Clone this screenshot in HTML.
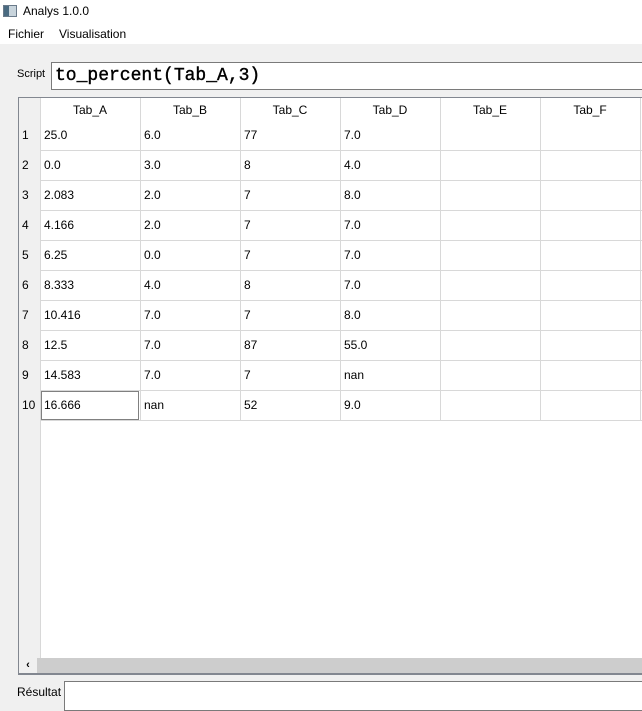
<!DOCTYPE html>
<html><head><meta charset="utf-8"><style>
*{margin:0;padding:0;box-sizing:border-box}
body{width:642px;height:705px;background:#f0f0f0;font-family:"Liberation Sans",sans-serif;font-size:12px;color:#000;position:relative;overflow:hidden}
.a{position:absolute}
</style></head><body>
<div class="a" style="left:0;top:0;width:642px;height:44px;background:#fff"></div>
<div class="a" style="left:3px;top:5px;width:14px;height:12px;border:1px solid #6a7a8a;background:linear-gradient(90deg,#4a6a80 0 40%,#c8d4dc 40%)"></div>
<div class="a" style="left:23px;top:4px;font-size:12px">Analys 1.0.0</div>
<div class="a" style="left:8px;top:27px">Fichier</div>
<div class="a" style="left:59px;top:27px">Visualisation</div>
<div class="a" style="left:17px;top:68px;font-size:11px">Script</div>
<div class="a" style="left:51px;top:62px;width:600px;height:28px;background:#fff;border:1px solid #7a7a7a;font-family:'Liberation Mono',monospace;font-size:18px;line-height:26px;padding-left:3px;-webkit-text-stroke:0.4px #000">to_percent(Tab_A,3)</div>
<div class="a" style="left:18px;top:97px;width:630px;height:578px;border:1px solid #828790;background:#fff"></div>
<div class="a" style="left:19px;top:98px;width:21px;height:560px;background:#f0f0f0"></div>
<div class="a" style="left:19px;top:658px;width:630px;height:16px;background:#cdcdcd"></div>
<div class="a" style="left:19px;top:658px;width:18px;height:16px;background:#f0f0f0;font-size:11px;line-height:15px;text-align:center;font-weight:bold">&lsaquo;</div>
<div class="a" style="left:19px;top:673px;width:630px;height:1px;background:#828790"></div>
<svg class="a" style="left:0;top:0" width="642" height="705">
<g stroke="#d8d8d8" stroke-width="1">
<line x1="140.5" y1="98" x2="140.5" y2="420"/><line x1="240.5" y1="98" x2="240.5" y2="420"/><line x1="340.5" y1="98" x2="340.5" y2="420"/><line x1="440.5" y1="98" x2="440.5" y2="420"/><line x1="540.5" y1="98" x2="540.5" y2="420"/><line x1="640.5" y1="98" x2="640.5" y2="420"/>
<line x1="40.5" y1="98" x2="40.5" y2="658"/>
<line x1="40" y1="150.5" x2="642" y2="150.5"/><line x1="40" y1="180.5" x2="642" y2="180.5"/><line x1="40" y1="210.5" x2="642" y2="210.5"/><line x1="40" y1="240.5" x2="642" y2="240.5"/><line x1="40" y1="270.5" x2="642" y2="270.5"/><line x1="40" y1="300.5" x2="642" y2="300.5"/><line x1="40" y1="330.5" x2="642" y2="330.5"/><line x1="40" y1="360.5" x2="642" y2="360.5"/><line x1="40" y1="390.5" x2="642" y2="390.5"/><line x1="40" y1="420.5" x2="642" y2="420.5"/>
</g>
<rect x="41.5" y="391.5" width="97" height="28" fill="none" stroke="#000" stroke-dasharray="1,1"/>
</svg>
<div class="a" style="top:103px;left:40px;width:600px;display:flex">
<div style="width:100px;text-align:center">Tab_A</div><div style="width:100px;text-align:center">Tab_B</div><div style="width:100px;text-align:center">Tab_C</div><div style="width:100px;text-align:center">Tab_D</div><div style="width:100px;text-align:center">Tab_E</div><div style="width:100px;text-align:center">Tab_F</div></div>
<div class="a" style="left:19px;top:120px;width:21px;line-height:30px;padding-left:3px">1<br>2<br>3<br>4<br>5<br>6<br>7<br>8<br>9<br>10</div>
<div class="a" style="left:40px;top:120px;line-height:30px;padding-left:4px">25.0<br>0.0<br>2.083<br>4.166<br>6.25<br>8.333<br>10.416<br>12.5<br>14.583<br>16.666</div>
<div class="a" style="left:140px;top:120px;line-height:30px;padding-left:4px">6.0<br>3.0<br>2.0<br>2.0<br>0.0<br>4.0<br>7.0<br>7.0<br>7.0<br>nan</div>
<div class="a" style="left:240px;top:120px;line-height:30px;padding-left:4px">77<br>8<br>7<br>7<br>7<br>8<br>7<br>87<br>7<br>52</div>
<div class="a" style="left:340px;top:120px;line-height:30px;padding-left:4px">7.0<br>4.0<br>8.0<br>7.0<br>7.0<br>7.0<br>8.0<br>55.0<br>nan<br>9.0</div>
<div class="a" style="left:17px;top:685px">Résultat</div>
<div class="a" style="left:64px;top:681px;width:590px;height:30px;background:#fff;border:1px solid #7a7a7a"></div>
</body></html>
